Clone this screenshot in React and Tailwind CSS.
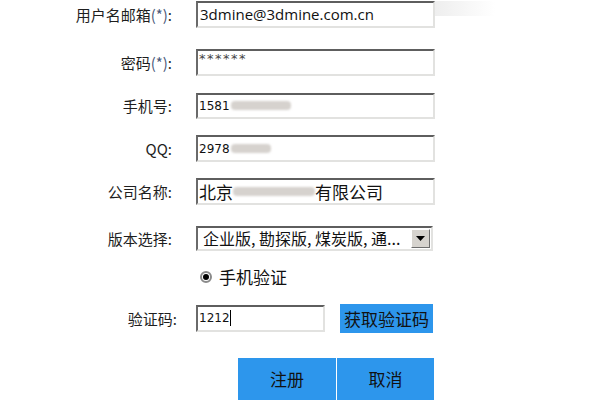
import React from 'react';

const cjk = { fontFamily: '"Noto Sans CJK SC", "Noto Sans", sans-serif' };

function Label({ children, wide }) {
  return (
    <div
      className={`${wide ? 'w-[177px]' : 'w-[172px]'} shrink-0 text-right text-[15px] text-[#1e1e1e] leading-none`}
      style={cjk}
    >
      {children}
    </div>
  );
}

function Star() {
  return <span className="text-[#4a5a7a]">(*)</span>;
}

function Box({ children, className = '' }) {
  return (
    <div
      className={`h-full flex items-center bg-white border-2 border-t-[#5e5e5e] border-l-[#6a6a6a] border-r-[#e2e2e0] border-b-[#e2e2e0] ${className}`}
    >
      {children}
    </div>
  );
}

function Smudge({ w }) {
  return <span className={`inline-block h-[9px] ${w} rounded-sm bg-[#d6d2ce] blur-[1px] align-middle`} />;
}

export default function App() {
  return (
    <div className="w-[600px] h-[400px] overflow-hidden bg-white flex flex-col">
      {/* 用户名邮箱 */}
      <div className="mt-[1px] h-[27px] flex items-center">
        <Label>用户名邮箱<Star />:</Label>
        <div className="ml-[24px] w-[239px] h-full">
          <Box className="pl-[2px]">
            <span className="text-[15px] text-[#111]" style={{ fontFamily: '"Open Sans", sans-serif' }}>
              3dmine@3dmine.com.cn
            </span>
          </Box>
        </div>
        <div className="self-start w-[60px] h-[15px] bg-gradient-to-r from-[#eeeeee] to-transparent" />
      </div>

      {/* 密码 */}
      <div className="mt-[21px] h-[27px] flex items-center">
        <Label>密码<Star />:</Label>
        <div className="ml-[24px] w-[239px] h-full">
          <Box className="items-start pl-[1px]">
            <span className="text-[13px] leading-[15px] tracking-[1.5px] text-[#444]" style={{ fontFamily: '"DejaVu Sans", sans-serif' }}>
              ******
            </span>
          </Box>
        </div>
      </div>

      {/* 手机号 */}
      <div className="mt-[17px] h-[27px] flex items-center">
        <Label>手机号:</Label>
        <div className="ml-[24px] w-[239px] h-full">
          <Box className="pl-[1px] gap-[1px]">
            <span className="text-[12px] text-[#111]" style={{ fontFamily: '"DejaVu Sans", sans-serif' }}>1581</span>
            <Smudge w="w-[60px]" />
          </Box>
        </div>
      </div>

      {/* QQ */}
      <div className="mt-[16px] h-[27px] flex items-center">
        <Label>QQ:</Label>
        <div className="ml-[24px] w-[239px] h-full">
          <Box className="pl-[1px] gap-[1px]">
            <span className="text-[12px] text-[#111]" style={{ fontFamily: '"DejaVu Sans", sans-serif' }}>2978</span>
            <Smudge w="w-[40px]" />
          </Box>
        </div>
      </div>

      {/* 公司名称 */}
      <div className="mt-[16px] h-[27px] flex items-center">
        <Label>公司名称:</Label>
        <div className="ml-[24px] w-[239px] h-full">
          <Box className="pl-[1px]">
            <span className="text-[17px] text-[#111] leading-none" style={cjk}>北京</span>
            <Smudge w="w-[82px]" />
            <span className="text-[17px] text-[#111] leading-none" style={cjk}>有限公司</span>
          </Box>
        </div>
      </div>

      {/* 版本选择 */}
      <div className="mt-[21px] h-[25px] flex items-center">
        <Label>版本选择:</Label>
        <div className="ml-[24px] w-[237px] h-full">
          <Box className="pl-[5px] pr-[1px] justify-between">
            <span className="text-[16px] text-[#111] leading-none whitespace-nowrap" style={cjk}>企业版, 勘探版, 煤炭版, 通...</span>
            <div className="w-[19px] h-[19px] shrink-0 flex items-center justify-center bg-[#d6d3ce] border border-t-white border-l-white border-r-[#6d6d6d] border-b-[#6d6d6d]">
              <svg width="9" height="5" viewBox="0 0 9 5">
                <path d="M0 0 H9 L4.5 5 Z" fill="#000" />
              </svg>
            </div>
          </Box>
        </div>
      </div>

      {/* 手机验证 */}
      <div className="mt-[16px] h-[20px] flex items-center pl-[200px] gap-[7px]">
        <div className="w-[12px] h-[12px] rounded-full bg-white border-2 border-[#8a8a8a] flex items-center justify-center">
          <div className="w-[6px] h-[6px] rounded-full bg-black" />
        </div>
        <span className="text-[17px] text-[#111] leading-none" style={cjk}>手机验证</span>
      </div>

      {/* 验证码 */}
      <div className="mt-[17px] h-[30px] flex items-center">
        <Label wide>验证码:</Label>
        <div className="ml-[19px] w-[129px] h-[27px]">
          <Box className="pl-[1px]">
            <span className="text-[12px] text-[#111]" style={{ fontFamily: '"DejaVu Sans", sans-serif' }}>1212</span>
            <span className="w-[1px] h-[16px] bg-black" />
          </Box>
        </div>
        <button
          className="ml-[15px] w-[93px] h-full bg-[#2d96ec] text-[17px] text-[#111] leading-none"
          style={cjk}
        >
          获取验证码
        </button>
      </div>

      {/* 注册 / 取消 */}
      <div className="mt-[25px] h-[42px] flex pl-[238px] gap-[1px]">
        <button className="w-[98px] h-full bg-[#2d96ec] text-[17px] text-[#111]" style={cjk}>注册</button>
        <button className="w-[97px] h-full bg-[#2d96ec] text-[17px] text-[#111]" style={cjk}>取消</button>
      </div>
    </div>
  );
}
